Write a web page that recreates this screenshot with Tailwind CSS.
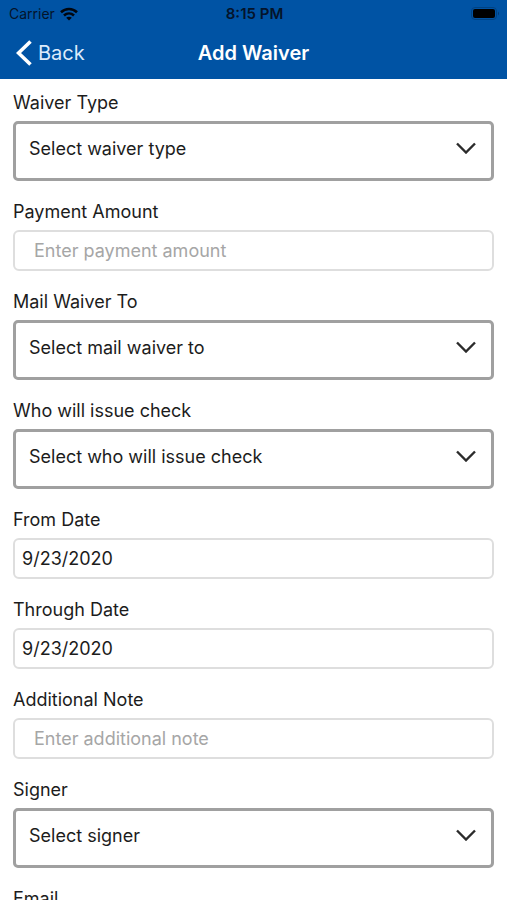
<!DOCTYPE html>
<html lang="en">
<head>
<meta charset="utf-8">
<meta name="viewport" content="width=device-width, initial-scale=1">
<title>Add Waiver</title>
<script src="https://cdn.jsdelivr.net/npm/@tailwindcss/browser@4"></script>
</head>
<body class="flex h-screen flex-col overflow-hidden bg-white font-['Inter',sans-serif] text-lg text-[#1c1c1c]">
<header class="shrink-0 bg-[#0053a4]">
  <div class="grid h-[27px] grid-cols-3 items-center pr-[7px] pl-[9px] text-sm text-[#04142b]">
    <div class="flex items-center gap-[5px]">
      <span>Carrier</span>
      <svg class="h-[14px] w-[18px]" viewBox="0 0 18 14" fill="none" stroke="#00060f" stroke-width="2.6" aria-hidden="true">
        <path d="M1 5.2C5.6.9 12.400.9 17 5.200"/>
        <path d="M4 8.500C7 5.800 11 5.800 14 8.500"/>
        <path d="M9 13.600L6.200 10.700C7.800 9.400 10.200 9.400 11.800 10.700Z" fill="#00060f" stroke="none"/>
      </svg>
    </div>
    <span class="text-center text-[15px] font-semibold">8:15 PM</span>
    <svg class="h-[13px] w-[29px] justify-self-end" viewBox="0 0 29 13" aria-hidden="true">
      <rect x=".5" y=".5" width="25" height="12" rx="3.500" fill="none" stroke="#004282"/>
      <rect x="2" y="2" width="22" height="9" rx="2" fill="#000"/>
      <path d="M27 4.500Q29 6.500 27 8.500Z" fill="#003a75"/>
    </svg>
  </div>
  <div class="grid h-[52px] grid-cols-[1fr_auto_1fr] items-center px-4 text-xl text-white">
    <button type="button" class="flex items-center gap-[6px] justify-self-start text-[#dcebfb]">
      <svg class="h-[26px] w-[16px]" viewBox="0 0 16 26" fill="none" stroke="#fff" stroke-width="3.600" aria-hidden="true"><path d="M14.500 1.500L2.500 13L14.500 24.500"/></svg>
      Back
    </button>
    <h1 class="font-semibold">Add Waiver</h1>
  </div>
</header>
<main class="min-h-0 flex-1 overflow-y-auto [scrollbar-width:none]">
  <form class="flex flex-col gap-[17px] px-[13px] pt-[10px]">
    <div class="flex flex-col gap-1">
      <label for="type" class="leading-7">Waiver Type</label>
      <div class="relative">
        <select id="type" class="block h-[60px] w-full appearance-none rounded-[5px] border-3 border-[#a0a0a0] bg-white pr-12 pb-[5px] pl-[13px]"><option>Select waiver type</option></select>
        <svg class="pointer-events-none absolute top-[21px] right-[18px] h-3 w-5" viewBox="0 0 20 12" fill="none" stroke="#2b2b2b" stroke-width="2.400" aria-hidden="true"><path d="M1 1.500L10 10.500L19 1.500"/></svg>
      </div>
    </div>
    <div class="flex flex-col gap-1">
      <label for="amount" class="leading-7">Payment Amount</label>
      <input id="amount" type="text" placeholder="Enter payment amount" class="h-[41px] w-full rounded-md border-2 border-[#dedede] px-[19px] placeholder:text-[#a6a6a6]">
    </div>
    <div class="flex flex-col gap-1">
      <label for="mail" class="leading-7">Mail Waiver To</label>
      <div class="relative">
        <select id="mail" class="block h-[60px] w-full appearance-none rounded-[5px] border-3 border-[#a0a0a0] bg-white pr-12 pb-[5px] pl-[13px]"><option>Select mail waiver to</option></select>
        <svg class="pointer-events-none absolute top-[21px] right-[18px] h-3 w-5" viewBox="0 0 20 12" fill="none" stroke="#2b2b2b" stroke-width="2.400" aria-hidden="true"><path d="M1 1.500L10 10.500L19 1.500"/></svg>
      </div>
    </div>
    <div class="flex flex-col gap-1">
      <label for="issuer" class="leading-7">Who will issue check</label>
      <div class="relative">
        <select id="issuer" class="block h-[60px] w-full appearance-none rounded-[5px] border-3 border-[#a0a0a0] bg-white pr-12 pb-[5px] pl-[13px]"><option>Select who will issue check</option></select>
        <svg class="pointer-events-none absolute top-[21px] right-[18px] h-3 w-5" viewBox="0 0 20 12" fill="none" stroke="#2b2b2b" stroke-width="2.400" aria-hidden="true"><path d="M1 1.500L10 10.500L19 1.500"/></svg>
      </div>
    </div>
    <div class="flex flex-col gap-1">
      <label for="from" class="leading-7">From Date</label>
      <input id="from" type="text" value="9/23/2020" class="h-[41px] w-full rounded-md border-2 border-[#dedede] px-[7px]">
    </div>
    <div class="flex flex-col gap-1">
      <label for="through" class="leading-7">Through Date</label>
      <input id="through" type="text" value="9/23/2020" class="h-[41px] w-full rounded-md border-2 border-[#dedede] px-[7px]">
    </div>
    <div class="flex flex-col gap-1">
      <label for="note" class="leading-7">Additional Note</label>
      <input id="note" type="text" placeholder="Enter additional note" class="h-[41px] w-full rounded-md border-2 border-[#dedede] px-[19px] placeholder:text-[#a6a6a6]">
    </div>
    <div class="flex flex-col gap-1">
      <label for="signer" class="leading-7">Signer</label>
      <div class="relative">
        <select id="signer" class="block h-[60px] w-full appearance-none rounded-[5px] border-3 border-[#a0a0a0] bg-white pr-12 pb-[5px] pl-[13px]"><option>Select signer</option></select>
        <svg class="pointer-events-none absolute top-[21px] right-[18px] h-3 w-5" viewBox="0 0 20 12" fill="none" stroke="#2b2b2b" stroke-width="2.400" aria-hidden="true"><path d="M1 1.500L10 10.500L19 1.500"/></svg>
      </div>
    </div>
    <div class="flex flex-col gap-1">
      <label for="email" class="leading-7">Email</label>
      <input id="email" type="email" class="h-[41px] w-full rounded-md border-2 border-[#dedede] px-[19px]">
    </div>
  </form>
</main>
</body>
</html>
